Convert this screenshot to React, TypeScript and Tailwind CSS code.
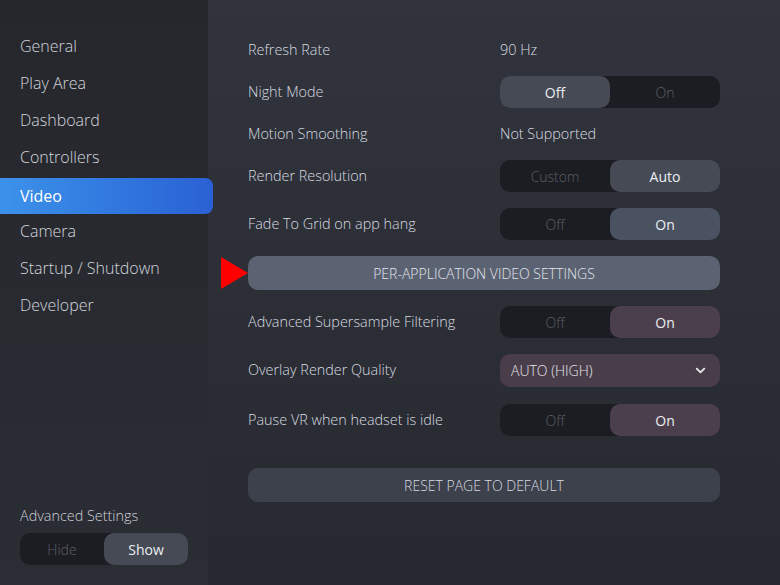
import { ChevronDown } from "lucide-react";

const font = { fontFamily: '"Open Sans", "Noto Sans", sans-serif' };

const navItems = [
	"General",
	"Play Area",
	"Dashboard",
	"Controllers",
	"Video",
	"Camera",
	"Startup / Shutdown",
	"Developer",
];

type ToggleProps = {
	left: string;
	right: string;
	active: "left" | "right";
	activeClass: string;
	className?: string;
};

function Toggle({ left, right, active, activeClass, className }: ToggleProps) {
	const on = `${activeClass} font-medium text-[#eceef2]`;
	const off = "font-light text-[#5b5f68]";
	return (
		<div
			className={`flex h-[32px] rounded-[10px] bg-[#1b1d22] text-[14px] ${className ?? "w-[220px]"}`}
		>
			<div
				className={`flex flex-1 items-center justify-center rounded-[10px] ${active === "left" ? on : off}`}
			>
				{left}
			</div>
			<div
				className={`flex flex-1 items-center justify-center rounded-[10px] ${active === "right" ? on : off}`}
			>
				{right}
			</div>
		</div>
	);
}

function Row({
	label,
	children,
	className,
}: {
	label: string;
	children: React.ReactNode;
	className: string;
}) {
	return (
		<div className={`flex items-center ${className}`}>
			<span className="w-[252px] text-[14.4px] font-light text-[#d8dbe1]">
				{label}
			</span>
			{children}
		</div>
	);
}

export default function App() {
	return (
		<div
			className="flex h-[585px] w-[780px] overflow-hidden bg-gradient-to-b from-[#31343c] to-[#272930]"
			style={font}
		>
			<aside className="relative z-10 flex w-[208px] shrink-0 flex-col bg-gradient-to-b from-[#25272c] to-[#2b2d35] pt-[27px]">
				<nav className="flex flex-col">
					{navItems.map((item) =>
						item === "Video" ? (
							<div
								className="mb-[-2px] mt-[3px] flex h-[36px] w-[213px] items-center rounded-r-[8px] bg-gradient-to-r from-[#3c92ea] to-[#2a60d4] pl-[20px] text-[16px] font-medium text-white"
								key={item}
							>
								{item}
							</div>
						) : (
							<div
								className="flex h-[37px] items-center pl-[20px] text-[16px] font-light text-[#d3d6dc]"
								key={item}
							>
								{item}
							</div>
						),
					)}
				</nav>
				<div className="mt-auto flex flex-col gap-[6px] pb-[20px] pl-[20px]">
					<span className="text-[14.4px] font-light text-[#cdd0d6]">
						Advanced Settings
					</span>
					<Toggle
						active="right"
						activeClass="bg-[#454a55]"
						className="w-[168px]"
						left="Hide"
						right="Show"
					/>
				</div>
			</aside>

			<main className="flex flex-1 flex-col pl-[40px] pt-[29px]">
				<div className="flex w-[472px] flex-col">
					<Row className="h-[42px]" label="Refresh Rate">
						<span className="text-[14.4px] font-light text-[#d8dbe1]">90 Hz</span>
					</Row>
					<Row className="h-[42px]" label="Night Mode">
						<Toggle
							active="left"
							activeClass="bg-[#454a55]"
							left="Off"
							right="On"
						/>
					</Row>
					<Row className="h-[42px]" label="Motion Smoothing">
						<span className="text-[14.4px] font-light text-[#d8dbe1]">
							Not Supported
						</span>
					</Row>
					<Row className="h-[42px]" label="Render Resolution">
						<Toggle
							active="right"
							activeClass="bg-[#454a55]"
							left="Custom"
							right="Auto"
						/>
					</Row>
					<Row className="mt-[7px] h-[40px]" label="Fade To Grid on app hang">
						<Toggle
							active="right"
							activeClass="bg-[#4a5261]"
							left="Off"
							right="On"
						/>
					</Row>
					<div className="relative mt-[12px]">
						<svg
							className="absolute left-[-27px] top-[1px]"
							height="32"
							viewBox="0 0 28 32"
							width="28"
						>
							<polygon fill="#ff0000" points="0,0 27,16 0,32" />
						</svg>
						<button
							className="flex h-[34px] w-full items-center justify-center rounded-[10px] bg-[#5b6373] text-[14px] font-light text-[#e3e6ec]"
							type="button"
						>
							PER-APPLICATION VIDEO SETTINGS
						</button>
					</div>
					<Row className="mt-[12px] h-[40px]" label="Advanced Supersample Filtering">
						<Toggle
							active="right"
							activeClass="bg-[#4c3f4d]"
							left="Off"
							right="On"
						/>
					</Row>
					<Row className="mt-[8px] h-[40px]" label="Overlay Render Quality">
						<div className="flex h-[33px] w-[220px] items-center justify-between rounded-[10px] bg-[#4a3d4a] pl-[11px] pr-[12px] text-[14px] font-light text-[#e5e7ec]">
							<span>AUTO (HIGH)</span>
							<ChevronDown className="size-[15px]" strokeWidth={3} />
						</div>
					</Row>
					<Row className="mt-[10px] h-[40px]" label="Pause VR when headset is idle">
						<Toggle
							active="right"
							activeClass="bg-[#4c3f4d]"
							left="Off"
							right="On"
						/>
					</Row>
					<button
						className="mt-[28px] flex h-[34px] w-full items-center justify-center rounded-[10px] bg-[#3d414b] text-[14px] font-light text-[#d8dbe1]"
						type="button"
					>
						RESET PAGE TO DEFAULT
					</button>
				</div>
			</main>
		</div>
	);
}
